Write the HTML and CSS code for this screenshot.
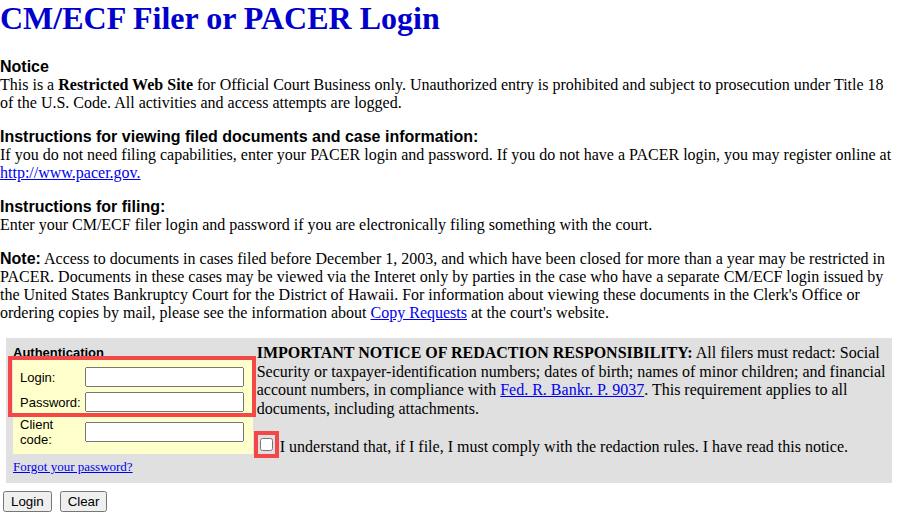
FILE: index.html
```html
<!DOCTYPE html>
<html lang="en">
<head>
<meta charset="utf-8">
<title>CM/ECF Filer or PACER Login</title>
<link rel="stylesheet" href="styles.css">
</head>
<body>
<h1 class="title">CM/ECF Filer or PACER Login</h1>

<div class="section">
  <div class="heading">Notice</div>
  <div class="text">This is a <b>Restricted Web Site</b> for Official Court Business only. Unauthorized entry is prohibited and subject to prosecution under Title 18 of the U.S. Code. All activities and access attempts are logged.</div>
</div>

<div class="section">
  <div class="heading">Instructions for viewing filed documents and case information:</div>
  <div class="text">If you do not need filing capabilities, enter your PACER login and password. If you do not have a PACER login, you may register online at <a href="#">http://www.pacer.gov.</a></div>
</div>

<div class="section">
  <div class="heading">Instructions for filing:</div>
  <div class="text">Enter your CM/ECF filer login and password if you are electronically filing something with the court.</div>
</div>

<div class="section">
  <div class="text"><span class="inline-heading">Note:</span> Access to documents in cases filed before December 1, 2003, and which have been closed for more than a year may be restricted in PACER. Documents in these cases may be viewed via the Interet only by parties in the case who have a separate CM/ECF login issued by the United States Bankruptcy Court for the District of Hawaii. For information about viewing these documents in the Clerk's Office or ordering copies by mail, please see the information about <a href="#">Copy Requests</a> at the court's website.</div>
</div>

<form class="login-form">
  <div class="panel">
    <div class="auth">
      <div class="auth-title">Authentication</div>
      <div class="auth-fields">
        <label class="field-label" for="login">Login:</label>
        <input class="field" id="login" type="text">
        <label class="field-label" for="password">Password:</label>
        <input class="field" id="password" type="password">
        <label class="field-label" for="client">Client code:</label>
        <input class="field" id="client" type="text">
      </div>
      <a class="forgot" href="#">Forgot your password?</a>
    </div>
    <div class="redaction">
      <div class="redaction-text"><b>IMPORTANT NOTICE OF REDACTION RESPONSIBILITY:</b> All filers must redact: Social Security or taxpayer-identification numbers; dates of birth; names of minor children; and financial account numbers, in compliance with <a href="#">Fed. R. Bankr. P. 9037</a>. This requirement applies to all documents, including attachments.</div>
      <div class="agree"><span class="check-wrap"><input class="check" type="checkbox"></span> I understand that, if I file, I must comply with the redaction rules. I have read this notice.</div>
    </div>
  </div>
  <div class="buttons">
    <button type="button" class="btn">Login</button>
    <button type="reset" class="btn">Clear</button>
  </div>
</form>
</body>
</html>
```

FILE: styles.css
```css
html, body {
  margin: 0;
  padding: 0;
  background: #ffffff;
}

body {
  font-family: "Liberation Serif", "Times New Roman", serif;
  font-size: 16px;
  color: #000000;
}

a {
  color: #0000ee;
}

.title {
  margin: 0 0 21px 0;
  font-family: "Liberation Serif", "Times New Roman", serif;
  font-size: 32px;
  font-weight: bold;
  color: #0000cc;
}

.section {
  margin: 0 0 16px 0;
}

.heading,
.inline-heading {
  font-family: "Liberation Sans", Arial, sans-serif;
  font-weight: bold;
  font-size: 16px;
}

.login-form {
  margin: 0;
}

.panel {
  display: flex;
  align-items: flex-start;
  gap: 4px;
  margin: 0 6px;
  padding: 0 0 8px 7px;
  background: #e0e0e0;
}

.auth {
  flex: none;
  padding-top: 7px;
}

.auth-title {
  font-family: "Liberation Sans", Arial, sans-serif;
  font-weight: bold;
  font-size: 13px;
}

.auth-fields {
  position: relative;
  display: grid;
  grid-template-columns: min-content 159px;
  column-gap: 4px;
  row-gap: 5px;
  align-items: center;
  padding: 7px 9px 7px 7px;
  background: #ffffcc;
}

.auth-fields::after {
  content: "";
  position: absolute;
  left: -5px;
  top: -4px;
  width: 248px;
  height: 61px;
  box-sizing: border-box;
  border: 4px solid #f44848;
  pointer-events: none;
}

.field-label {
  font-family: "Liberation Sans", Arial, sans-serif;
  font-size: 13px;
}

.field {
  width: 159px;
  height: 20px;
  box-sizing: border-box;
  margin: 0;
}

.forgot {
  display: block;
  margin-top: 5px;
  font-size: 13px;
}

.redaction {
  flex: 1;
  padding: 6px 2px 0 0;
  line-height: 18.5px;
}

.agree {
  margin-top: 20px;
}

.check-wrap {
  position: relative;
  display: inline-flex;
  margin: 0 3px 0 3px;
  vertical-align: 1px;
}

.check-wrap::after {
  content: "";
  position: absolute;
  left: -6px;
  right: -6px;
  top: -7px;
  bottom: -7px;
  border: 4px solid #f44848;
  pointer-events: none;
}

.check {
  display: block;
  margin: 0;
  width: 13px;
  height: 13px;
}

.buttons {
  display: flex;
  gap: 8px;
  margin: 8px 0 0 3px;
}

.btn {
  font-family: "Liberation Sans", Arial, sans-serif;
  font-size: 13.333px;
  margin: 0;
}
```
